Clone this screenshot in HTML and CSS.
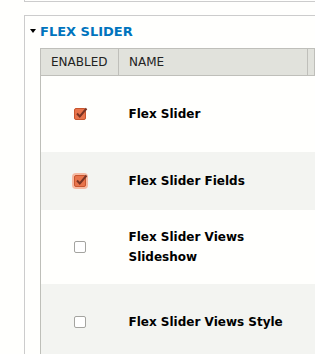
FILE: index.html
```html
<!DOCTYPE html>
<html lang="en">

<head>
    <meta charset="UTF-8">
    <title>Modules</title>
    <link rel="stylesheet" href="styles.css">
</head>

<body>
    <div class="page">
        <div class="prev-fieldset"></div>

        <div class="fieldset">
            <div class="legend"><span class="arrow"></span>Flex Slider</div>

            <table class="modules">
                <colgroup>
                    <col class="col-enabled">
                    <col class="col-name">
                    <col class="col-rest">
                </colgroup>
                <thead>
                    <tr>
                        <th>Enabled</th>
                        <th>Name</th>
                        <th></th>
                    </tr>
                </thead>
                <tbody>
                    <tr class="odd tall">
                        <td class="check">
                            <span class="box checked">
                                <svg viewBox="0 0 14 14" width="14" height="14"><path d="M3 6.5 L5.8 9.5 L12.5 1.5" fill="none" stroke="#7a3424" stroke-width="2"/></svg>
                            </span>
                        </td>
                        <td class="name">Flex Slider</td>
                        <td></td>
                    </tr>
                    <tr class="even short">
                        <td class="check">
                            <span class="box checked focused">
                                <svg viewBox="0 0 14 14" width="14" height="14"><path d="M3 6.5 L5.8 9.5 L12.5 1.5" fill="none" stroke="#7a3424" stroke-width="2"/></svg>
                            </span>
                        </td>
                        <td class="name">Flex Slider Fields</td>
                        <td></td>
                    </tr>
                    <tr class="odd double">
                        <td class="check"><span class="box"></span></td>
                        <td class="name">Flex Slider Views Slideshow</td>
                        <td></td>
                    </tr>
                    <tr class="even tall">
                        <td class="check"><span class="box"></span></td>
                        <td class="name">Flex Slider Views Style</td>
                        <td></td>
                    </tr>
                </tbody>
            </table>
        </div>
    </div>
</body>

</html>
```

FILE: styles.css
```css
body {
    margin: 0;
    background: #fffffd;
    font-family: 'DejaVu Sans', sans-serif;
    font-size: 12px;
    color: #000;
    overflow: hidden;
}

.page {
    padding-left: 24px;
    width: 291px;
}

.prev-fieldset {
    height: 1px;
    border-left: 1px solid #ccc;
    border-bottom: 1px solid #ccc;
}

.fieldset {
    margin-top: 13px;
    border: 1px solid #ccc;
    border-right: none;
    padding: 0 0 0 15px;
}

.legend {
    height: 30px;
    margin-bottom: 2px;
    display: flex;
    align-items: center;
    margin-left: -10px;
    color: #0074bd;
    font-weight: bold;
    font-size: 13px;
    text-transform: uppercase;
}

.arrow {
    width: 0;
    height: 0;
    border-left: 3.5px solid transparent;
    border-right: 3.5px solid transparent;
    border-top: 4px solid #000;
    margin-right: 4px;
}

.modules {
    border-collapse: collapse;
    table-layout: fixed;
    width: 275px;
}

.col-enabled {
    width: 78px;
}

.col-name {
    width: 189px;
}

.modules th {
    height: 26px;
    padding: 0 10px;
    background: #e1e2dc;
    border: 1px solid #bfbfba;
    font-weight: normal;
    text-align: left;
    text-transform: uppercase;
    color: #222;
    white-space: nowrap;
}

.modules td {
    padding: 0 10px;
    vertical-align: middle;
}

.modules tr.odd {
    background: #fffffd;
}

.modules tr.even {
    background: #f3f4f1;
}

.modules tbody tr {
    border-left: 1px solid #bebfb9;
}

.modules tr.tall {
    height: 76px;
}

.modules tr.short {
    height: 58px;
}

.modules tr.double {
    height: 74px;
}

.modules td.check {
    text-align: center;
    padding: 0;
}

.modules td.name {
    font-weight: bold;
    line-height: 20px;
}

.box {
    display: inline-block;
    position: relative;
    width: 10px;
    height: 10px;
    border: 1px solid #a4a4a0;
    border-radius: 2px;
    background: #fff;
    vertical-align: middle;
}

.box.checked {
    background: #e8744c;
    border-color: #c8552e;
}

.box svg {
    position: absolute;
    left: -1px;
    top: -2px;
}

.box.focused {
    box-shadow: 0 0 0 2px #f6b9a2;
}
```
